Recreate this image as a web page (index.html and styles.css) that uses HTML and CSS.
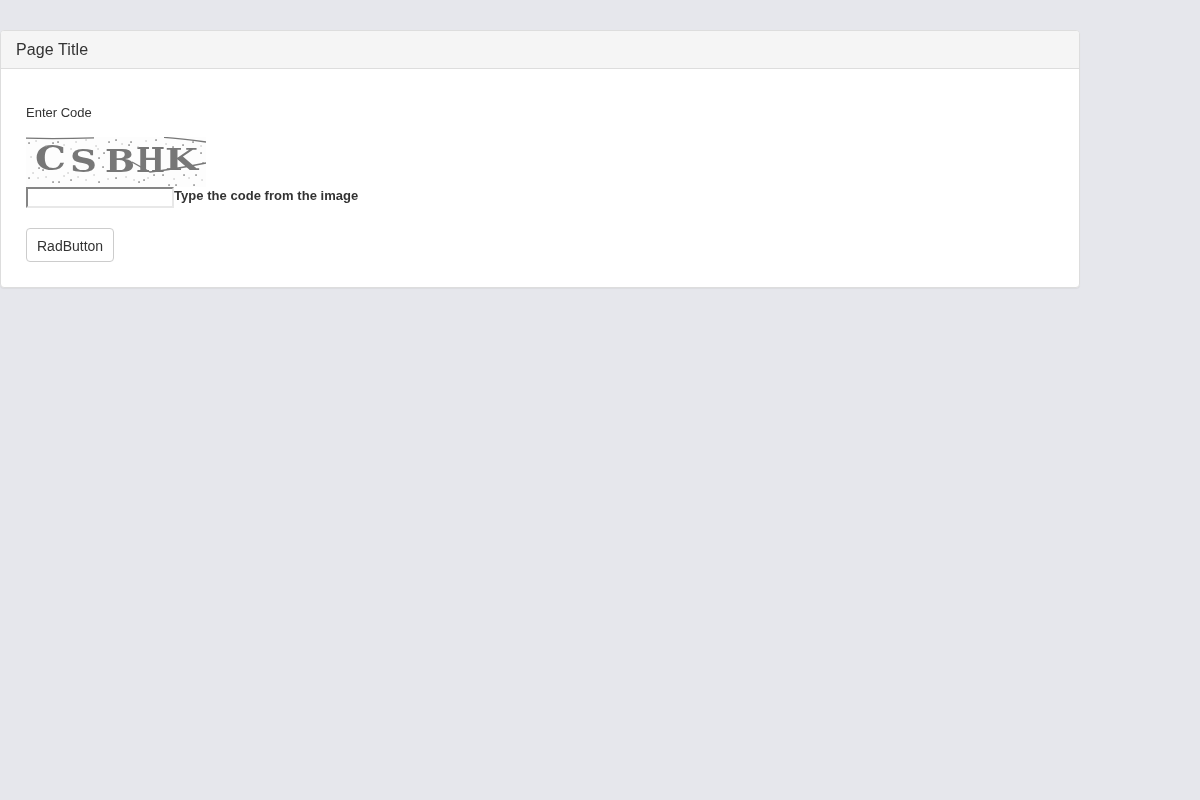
FILE: index.html
```html
<!DOCTYPE html>
<html lang="en">
<head>
<meta charset="utf-8">
<title>Page Title</title>
<link rel="stylesheet" href="styles.css">
</head>
<body>
<div class="panel">
  <div class="panel-heading">Page Title</div>
  <div class="panel-body">
    <label class="enter-code">Enter Code</label>
    <svg class="captcha" width="180" height="50" viewBox="0 0 180 50" role="img" aria-label="CSBHK">
      <g class="captcha-art">
        <path class="noise-line" d="M0 1.2 Q30 2.2 68 .8"/>
        <path class="noise-line" d="M138 .4 Q155 1.6 180 5"/>
        <path class="noise-line" d="M106 25 L124 35 Q150 32 180 26"/>
        <text class="c1" x="9" y="33" textLength="31" lengthAdjust="spacingAndGlyphs">C</text>
        <text class="c2" x="44" y="35" textLength="27" lengthAdjust="spacingAndGlyphs">S</text>
        <text class="c3" x="79" y="35" textLength="30" lengthAdjust="spacingAndGlyphs">B</text>
        <text class="c4" x="110" y="35" textLength="29" lengthAdjust="spacingAndGlyphs">H</text>
        <text class="c5" x="139" y="33" textLength="33" lengthAdjust="spacingAndGlyphs">K</text>
        <path class="specks" d="M3 6h.1M27 6h.1M32 5h.1M83 5h.1M90 3h.1M105 5h.1M103 8h.1M130 3h.1M147 10h.1M157 8h.1M167 5h.1M13 31h.1M17 33h.1M3 41h.1M27 45h.1M33 45h.1M45 43h.1M73 45h.1M77 30h.1M73 21h.1M78 16h.1M90 41h.1M113 45h.1M118 43h.1M128 38h.1M137 38h.1M143 48h.1M150 48h.1M158 38h.1M168 48h.1M133 30h.1M175 16h.1M177 26h.1M170 38h.1"/>
        <path class="specks specks-light" d="M10 4h.1M20 9h.1M38 8h.1M50 5h.1M60 3h.1M70 9h.1M96 7h.1M112 10h.1M120 4h.1M140 7h.1M175 9h.1M5 20h.1M7 36h.1M12 41h.1M20 40h.1M38 39h.1M52 40h.1M60 43h.1M68 38h.1M82 42h.1M100 40h.1M108 43h.1M122 41h.1M148 42h.1M163 41h.1M176 43h.1M45 12h.1M72 12h.1M42 36h.1"/>
      </g>
    </svg>
    <div class="code-row"><input class="code-input" type="text" aria-label="Code"><label class="code-label">Type the code from the image</label></div>
    <button class="rad-button" type="button">RadButton</button>
  </div>
</div>
</body>
</html>
```

FILE: styles.css
```css
html, body {
  margin: 0;
  padding: 0;
}
body {
  background: #e6e7ec;
  color: #333;
  font-family: "Liberation Sans", Arial, sans-serif;
  font-size: 13px;
  line-height: 1.43;
  min-height: 800px;
}
.panel {
  box-sizing: border-box;
  width: 1080px;
  margin: 30px 0 0 0;
  background: #fff;
  border: 1px solid #ddd;
  border-radius: 4px;
  box-shadow: 0 1px 1px rgba(0, 0, 0, .05);
  overflow: hidden;
  will-change: opacity;
}
.panel-heading {
  box-sizing: border-box;
  height: 38px;
  padding: 9px 15px;
  background: #f5f5f5;
  border-bottom: 1px solid #ddd;
  font-size: 16px;
  line-height: 20px;
  letter-spacing: .1px;
}
.panel-body {
  padding: 34px 25px 25px;
}
.enter-code {
  display: block;
  height: 19px;
  line-height: 19px;
  margin-bottom: 15px;
}
.captcha {
  display: block;
  background: #fdfdfd;
}
.captcha-art {
  filter: blur(.4px);
}
.captcha-art text {
  fill: #777;
  font-family: "DejaVu Serif", serif;
  font-weight: 700;
}
.c1 { font-size: 33px; }
.c2 { font-size: 31px; }
.c3 { font-size: 32px; }
.c4 { font-size: 33px; }
.c5 { font-size: 29px; }
.noise-line {
  fill: none;
  stroke: #777;
  stroke-width: 1.3;
}
.specks {
  fill: none;
  stroke: #777;
  stroke-width: 1.7;
  stroke-linecap: round;
}
.specks-light {
  stroke: #b5b5b5;
  stroke-width: 1.3;
}
.code-row {
  display: flex;
  align-items: flex-start;
  height: 21px;
}
.code-input {
  box-sizing: border-box;
  width: 148px;
  height: 21px;
  margin: 0;
  padding: 1px 2px;
  background: #fff;
  border-style: solid;
  border-width: 2px;
  border-color: #858585 #e8e8e8 #e8e8e8 #858585;
}
.code-label {
  font-weight: 700;
  line-height: 17px;
  letter-spacing: .04px;
}
.rad-button {
  display: block;
  box-sizing: border-box;
  width: 88px;
  height: 34px;
  margin: 20px 0 0;
  padding: 7px 10px 5px;
  background: #fff;
  border: 1px solid #ccc;
  border-radius: 4px;
  color: #333;
  font-family: "Liberation Sans", Arial, sans-serif;
  font-size: 14px;
  line-height: 20px;
}
```
